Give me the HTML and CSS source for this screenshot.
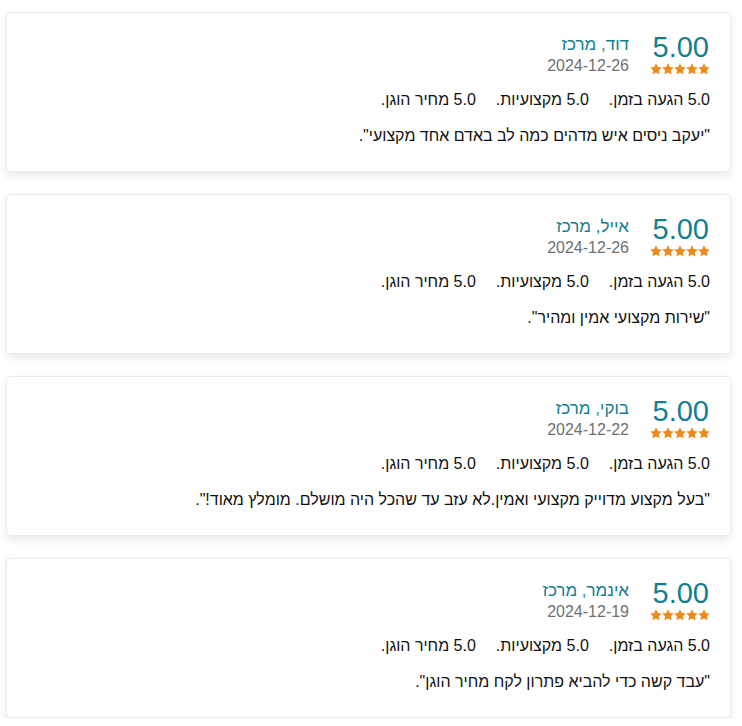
FILE: index.html
```html
<!DOCTYPE html>
<html lang="he" dir="rtl">
<head>
    <meta charset="UTF-8">
    <meta name="viewport" content="width=device-width, initial-scale=1.0">
    <title>ביקורות</title>
    <link rel="stylesheet" href="styles.css">
</head>
<body>

    <svg width="0" height="0" style="position:absolute">
        <symbol id="star" viewBox="0 0 24 24">
            <path d="M12 .6l3.6 7.3 8 1.2-5.8 5.6 1.4 8L12 18.9l-7.2 3.8 1.4-8L.4 9.1l8-1.2z"/>
        </symbol>
    </svg>

    <section class="reviews">

        <article class="review">
            <header class="review-head">
                <div class="score">
                    <span class="score-num">5.00</span>
                    <span class="stars">
                        <svg><use href="#star"/></svg><svg><use href="#star"/></svg><svg><use href="#star"/></svg><svg><use href="#star"/></svg><svg><use href="#star"/></svg>
                    </span>
                </div>
                <div class="who">
                    <span class="who-name">דוד, מרכז</span>
                    <span class="who-date">2024-12-26</span>
                </div>
            </header>
            <ul class="marks">
                <li>5.0 הגעה בזמן.</li>
                <li>5.0 מקצועיות.</li>
                <li>5.0 מחיר הוגן.</li>
            </ul>
            <p class="quote">"יעקב ניסים איש מדהים כמה לב באדם אחד מקצועי".</p>
        </article>

        <article class="review">
            <header class="review-head">
                <div class="score">
                    <span class="score-num">5.00</span>
                    <span class="stars">
                        <svg><use href="#star"/></svg><svg><use href="#star"/></svg><svg><use href="#star"/></svg><svg><use href="#star"/></svg><svg><use href="#star"/></svg>
                    </span>
                </div>
                <div class="who">
                    <span class="who-name">אייל, מרכז</span>
                    <span class="who-date">2024-12-26</span>
                </div>
            </header>
            <ul class="marks">
                <li>5.0 הגעה בזמן.</li>
                <li>5.0 מקצועיות.</li>
                <li>5.0 מחיר הוגן.</li>
            </ul>
            <p class="quote">"שירות מקצועי אמין ומהיר".</p>
        </article>

        <article class="review">
            <header class="review-head">
                <div class="score">
                    <span class="score-num">5.00</span>
                    <span class="stars">
                        <svg><use href="#star"/></svg><svg><use href="#star"/></svg><svg><use href="#star"/></svg><svg><use href="#star"/></svg><svg><use href="#star"/></svg>
                    </span>
                </div>
                <div class="who">
                    <span class="who-name">בוקי, מרכז</span>
                    <span class="who-date">2024-12-22</span>
                </div>
            </header>
            <ul class="marks">
                <li>5.0 הגעה בזמן.</li>
                <li>5.0 מקצועיות.</li>
                <li>5.0 מחיר הוגן.</li>
            </ul>
            <p class="quote">"בעל מקצוע מדוייק מקצועי ואמין.לא עזב עד שהכל היה מושלם. מומלץ מאוד!".</p>
        </article>

        <article class="review">
            <header class="review-head">
                <div class="score">
                    <span class="score-num">5.00</span>
                    <span class="stars">
                        <svg><use href="#star"/></svg><svg><use href="#star"/></svg><svg><use href="#star"/></svg><svg><use href="#star"/></svg><svg><use href="#star"/></svg>
                    </span>
                </div>
                <div class="who">
                    <span class="who-name">אינמר, מרכז</span>
                    <span class="who-date">2024-12-19</span>
                </div>
            </header>
            <ul class="marks">
                <li>5.0 הגעה בזמן.</li>
                <li>5.0 מקצועיות.</li>
                <li>5.0 מחיר הוגן.</li>
            </ul>
            <p class="quote">"עבד קשה כדי להביא פתרון לקח מחיר הוגן".</p>
        </article>

    </section>

</body>
</html>
```

FILE: styles.css
```css
* {
    box-sizing: border-box;
}

:root {
    --teal: #127f8f;
    --orange: #ee8a1c;
    --gray: #6f6f6f;
    --ink: #111;
}

body {
    margin: 0;
    background: #fff;
    color: var(--ink);
    font-family: "Liberation Sans", sans-serif;
}

.reviews {
    display: flex;
    flex-direction: column;
    gap: 22px;
    padding: 12px 11px 0 6px;
}

.review {
    height: 160px;
    padding: 19px 20px 0 20px;
    background: #fff;
    border: 1px solid #ececec;
    border-radius: 4px;
    box-shadow: 0 4px 10px rgba(0, 0, 0, 0.09);
}

.review-head {
    display: flex;
    align-items: flex-start;
    gap: 21px;
}

.score {
    display: flex;
    flex-direction: column;
    align-items: flex-start;
}

.score-num {
    font-size: 29px;
    line-height: 30px;
    color: var(--teal);
    margin-right: 1px;
}

.stars {
    display: flex;
    direction: ltr;
    margin-top: 1px;
}

.stars svg {
    width: 12px;
    height: 12px;
    fill: var(--orange);
}

.who {
    display: flex;
    flex-direction: column;
    align-items: flex-start;
    padding-top: 3px;
}

.who-name {
    font-size: 17px;
    line-height: 20px;
    color: var(--teal);
}

.who-date {
    font-size: 16px;
    line-height: 22px;
    color: var(--gray);
}

.marks {
    list-style: none;
    margin: 13px 0 0;
    padding: 0;
    display: flex;
    gap: 20px;
    font-size: 16px;
    line-height: 20px;
}

.quote {
    margin: 16px 0 0;
    font-size: 16px;
    line-height: 20px;
}
```
